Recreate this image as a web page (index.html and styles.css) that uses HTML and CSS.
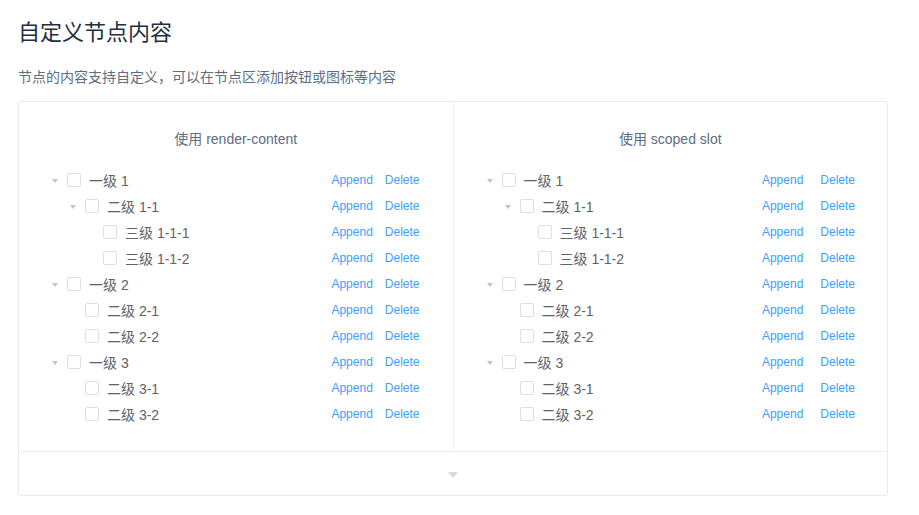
FILE: index.html
```html
<!DOCTYPE html>
<html lang="zh-CN">
<head>
<meta charset="utf-8">
<title>自定义节点内容</title>
<link rel="stylesheet" href="styles.css">
</head>
<body>
<div class="page">
  <h3 class="title">自定义节点内容</h3>
  <p class="desc">节点的内容支持自定义，可以在节点区添加按钮或图标等内容</p>
  <div class="demo-block">
    <div class="source">
      <div class="col">
        <div class="demonstration">使用 render-content</div>
        <div class="tree">
          <div class="node l1"><span class="caret"></span><span class="cb"></span><span class="label"><span>一级 1</span><span class="btns"><a>Append</a><a>Delete</a></span></span></div>
          <div class="node l2"><span class="caret"></span><span class="cb"></span><span class="label"><span>二级 1-1</span><span class="btns"><a>Append</a><a>Delete</a></span></span></div>
          <div class="node l3"><span class="caret leaf"></span><span class="cb"></span><span class="label"><span>三级 1-1-1</span><span class="btns"><a>Append</a><a>Delete</a></span></span></div>
          <div class="node l3"><span class="caret leaf"></span><span class="cb"></span><span class="label"><span>三级 1-1-2</span><span class="btns"><a>Append</a><a>Delete</a></span></span></div>
          <div class="node l1"><span class="caret"></span><span class="cb"></span><span class="label"><span>一级 2</span><span class="btns"><a>Append</a><a>Delete</a></span></span></div>
          <div class="node l2"><span class="caret leaf"></span><span class="cb"></span><span class="label"><span>二级 2-1</span><span class="btns"><a>Append</a><a>Delete</a></span></span></div>
          <div class="node l2"><span class="caret leaf"></span><span class="cb"></span><span class="label"><span>二级 2-2</span><span class="btns"><a>Append</a><a>Delete</a></span></span></div>
          <div class="node l1"><span class="caret"></span><span class="cb"></span><span class="label"><span>一级 3</span><span class="btns"><a>Append</a><a>Delete</a></span></span></div>
          <div class="node l2"><span class="caret leaf"></span><span class="cb"></span><span class="label"><span>二级 3-1</span><span class="btns"><a>Append</a><a>Delete</a></span></span></div>
          <div class="node l2"><span class="caret leaf"></span><span class="cb"></span><span class="label"><span>二级 3-2</span><span class="btns"><a>Append</a><a>Delete</a></span></span></div>
        </div>
      </div>
      <div class="col slot">
        <div class="demonstration">使用 scoped slot</div>
        <div class="tree">
          <div class="node l1"><span class="caret"></span><span class="cb"></span><span class="label"><span>一级 1</span><span class="btns"><a>Append</a><a>Delete</a></span></span></div>
          <div class="node l2"><span class="caret"></span><span class="cb"></span><span class="label"><span>二级 1-1</span><span class="btns"><a>Append</a><a>Delete</a></span></span></div>
          <div class="node l3"><span class="caret leaf"></span><span class="cb"></span><span class="label"><span>三级 1-1-1</span><span class="btns"><a>Append</a><a>Delete</a></span></span></div>
          <div class="node l3"><span class="caret leaf"></span><span class="cb"></span><span class="label"><span>三级 1-1-2</span><span class="btns"><a>Append</a><a>Delete</a></span></span></div>
          <div class="node l1"><span class="caret"></span><span class="cb"></span><span class="label"><span>一级 2</span><span class="btns"><a>Append</a><a>Delete</a></span></span></div>
          <div class="node l2"><span class="caret leaf"></span><span class="cb"></span><span class="label"><span>二级 2-1</span><span class="btns"><a>Append</a><a>Delete</a></span></span></div>
          <div class="node l2"><span class="caret leaf"></span><span class="cb"></span><span class="label"><span>二级 2-2</span><span class="btns"><a>Append</a><a>Delete</a></span></span></div>
          <div class="node l1"><span class="caret"></span><span class="cb"></span><span class="label"><span>一级 3</span><span class="btns"><a>Append</a><a>Delete</a></span></span></div>
          <div class="node l2"><span class="caret leaf"></span><span class="cb"></span><span class="label"><span>二级 3-1</span><span class="btns"><a>Append</a><a>Delete</a></span></span></div>
          <div class="node l2"><span class="caret leaf"></span><span class="cb"></span><span class="label"><span>二级 3-2</span><span class="btns"><a>Append</a><a>Delete</a></span></span></div>
        </div>
      </div>
    </div>
    <div class="control"><span class="ctrl-caret"></span></div>
  </div>
</div>
</body>
</html>
```
FILE: styles.css
```css
* { box-sizing: border-box; }
html, body { margin: 0; padding: 0; background: #fff; }
body {
  font-family: "Liberation Sans", Arial, "Noto Sans CJK SC", sans-serif;
  color: #606266;
}
.page {
  padding: 17px 31px 0 18px;
}
.title {
  margin: 0;
  font-size: 22px;
  font-weight: 400;
  line-height: 32px;
  color: #1f2f3d;
}
.desc {
  margin: 17px 0 13px 0;
  font-size: 14px;
  line-height: 22px;
  color: #5e6d82;
}
.demo-block {
  border: 1px solid #ebebeb;
  border-radius: 3px;
  width: 870px;
}
.source {
  display: flex;
}
.col {
  flex: 1 1 0;
  padding: 27px 24px 24px;
}
.col:first-child {
  border-right: 1px solid #eff2f6;
}
.demonstration {
  text-align: center;
  font-size: 14px;
  line-height: 20px;
  color: #5e6d82;
  margin-bottom: 18px;
}
.node {
  display: flex;
  align-items: center;
  height: 26px;
}
.l2 { padding-left: 18px; }
.l3 { padding-left: 36px; }
.caret {
  width: 24px;
  height: 24px;
  display: flex;
  align-items: center;
  justify-content: center;
  flex: none;
}
.caret::before {
  content: "";
  width: 0;
  height: 0;
  border-left: 3.5px solid transparent;
  border-right: 3.5px solid transparent;
  border-top: 4px solid #c0c4cc;
  margin-top: 1px;
}
.caret.leaf::before { border-top-color: transparent; }
.cb {
  width: 14px;
  height: 14px;
  border: 1px solid #dcdfe6;
  border-radius: 2px;
  background: #fff;
  margin-right: 8px;
  flex: none;
}
.label {
  flex: 1;
  display: flex;
  align-items: center;
  justify-content: space-between;
  padding-right: 8px;
  font-size: 14px;
  color: #606266;
}
.btns {
  display: flex;
  gap: 12px;
  margin-right: 1px;
}
.slot .btns {
  gap: 17px;
  margin-right: 0;
}
.btns a {
  font-size: 12px;
  color: #409eff;
  cursor: pointer;
}
.control {
  border-top: 1px solid #eaeefb;
  height: 44px;
  display: flex;
  align-items: center;
  justify-content: center;
}
.ctrl-caret {
  width: 0;
  height: 0;
  border-left: 5px solid transparent;
  border-right: 5px solid transparent;
  border-top: 6px solid #d3dce6;
  margin-top: 2px;
}
```
